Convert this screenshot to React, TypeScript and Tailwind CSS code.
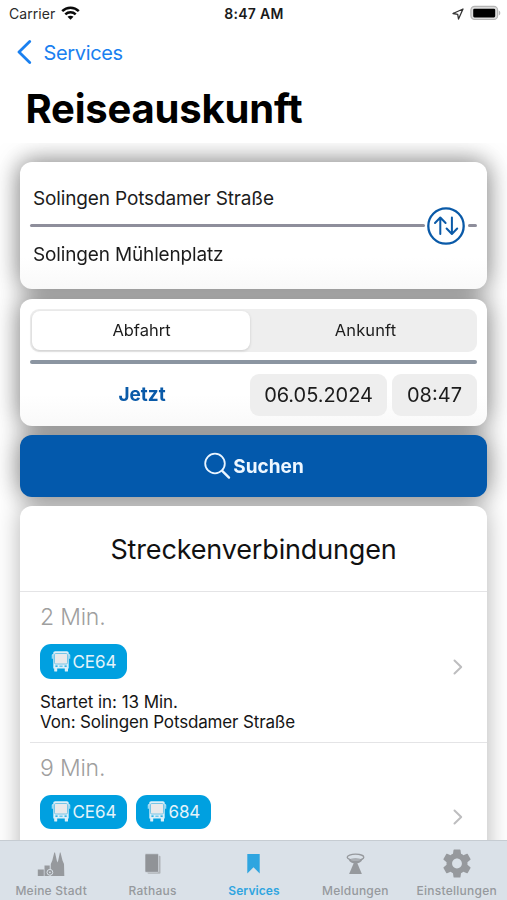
import React from "react";

function BusIcon() {
  return (
    <svg width="20" height="21" viewBox="0 0 20 21" className="block shrink-0">
      <path
        fill="#dceff8"
        fillRule="evenodd"
        d="M4.200 .3h11.600c1.200 0 1.900.7 1.900 1.800V17.500H2.300V2.100C2.300 1 3 .3 4.200.3ZM4.400 14.500v1.300h2.200v-1.300Zm4 .2v.9h3.200v-.9Zm5.100 -.2v1.300h2.200v-1.300Z"
      />
      <rect x="3.500" y="2.500" width="13" height="10.500" rx="1.200" fill="#e9e9ea" stroke="#5bbce6" strokeWidth=".8" />
      <path fill="#dceff8" d="M2.600 17h3.600v2.900c0 .4-.3.700-.7.700H3.900c-.4 0-.7-.3-.7-.7V17ZM13.800 17h3.200v2.900c0 .4-.3.700-.7.700h-1.800c-.4 0-.7-.3-.7-.7Z" />
      <path fill="#dceff8" d="M2.500 3.200H1.600C1.100 3.200.8 3.500.8 4v3.800h.9V4.300h.8ZM17.500 3.200h.9c.5 0 .8.300.8.800v3.800h-.9V4.300h-.8Z" />
    </svg>
  );
}

function Badge({ label, width }: { label: string; width: string }) {
  return (
    <div className={`flex h-[34.500px] items-center rounded-[11px] bg-[#00a0e0] pl-[11px] ${width}`}>
      <BusIcon />
      <span className="ml-[1.500px] pt-[1.500px] text-[17px] leading-none tracking-[-0.1px] text-[#e4f3fa]">{label}</span>
    </div>
  );
}

function Chevron() {
  return (
    <svg width="10" height="16" viewBox="0 0 10 16" className="block">
      <path d="M1.500 1.500 8.200 8 1.500 14.500" fill="none" stroke="#bdbdbf" strokeWidth="2" strokeLinecap="round" strokeLinejoin="round" />
    </svg>
  );
}

function StatusBar() {
  return (
    <div className="grid h-[27px] grid-cols-3 items-center pr-[6px] pl-[9px]">
      <div className="flex items-center gap-[6px]">
        <span className="text-[14px] leading-none tracking-[0.05px] text-[#2b2b2b]">Carrier</span>
        <svg width="19" height="14" viewBox="0 0 19 14" className="-mt-[2px] block">
          <g fill="none" stroke="#0a0a0a" strokeWidth="2.500">
            <path d="M1.200 5.200C5.800.6 13.200.6 17.800 5.200" />
            <path d="M4.300 8.300C7.200 5.500 11.800 5.500 14.700 8.300" />
          </g>
          <path d="M9.500 13.800 6.500 10.700C8.100 9.300 10.900 9.300 12.500 10.700Z" fill="#0a0a0a" />
        </svg>
      </div>
      <div className="pr-[2px] text-center text-[14px] leading-none font-semibold tracking-[0.3px] text-[#1a1a1a]">8:47 AM</div>
      <div className="flex items-center justify-end gap-[6.500px]">
        <svg width="12" height="12" viewBox="0 0 12 12" className="block">
          <path d="M11 1 1 5.500 5.700 6.300 6.500 11Z" fill="none" stroke="#333" strokeWidth="1.300" strokeLinejoin="round" />
        </svg>
        <svg width="31" height="16" viewBox="0 0 31 16" className="-mt-[1px] block">
          <rect x=".9" y="1.300" width="26.700" height="13.200" rx="3.700" fill="#dcdcdc" stroke="#b5b5b5" strokeWidth="1.200" />
          <rect x="3.200" y="3.700" width="22" height="8.700" rx="1.300" fill="#000" />
          <path d="M28.800 5.500c2 .8 2 4.200 0 5Z" fill="#b5b5b5" />
        </svg>
      </div>
    </div>
  );
}

const CARD = "flex h-[127px] flex-col rounded-[12px] bg-linear-to-b from-white from-75% to-[#f9f9f9] px-[10px]";

function RouteCard() {
  return (
    <section className={`${CARD} pt-[23px]`}>
      <div className="h-[21px] pl-[3px] text-[19px] leading-[27px] tracking-[-0.14px] text-[#1c1c1c]">Solingen Potsdamer Straße</div>
      <div className="flex h-[39px] items-center">
        <div className="h-[3.500px] w-[395px] rounded-full bg-[#8e8e9b]" />
        <svg width="38" height="38" viewBox="0 0 38 38" className="mx-[2px] block shrink-0">
          <circle cx="19" cy="19" r="17.700" fill="#fff" stroke="#0a5aa8" strokeWidth="2.300" />
          <g fill="none" stroke="#0a5aa8" strokeWidth="2" strokeLinecap="round" strokeLinejoin="round">
            <path d="M13.300 27V10.800M8 16l5.300-5.500L18.600 16" />
            <path d="M24.900 10.500V26.800M19.600 21.500l5.300 5.500 5.300-5.500" />
          </g>
        </svg>
        <div className="ml-[1px] h-[3.500px] flex-1 rounded-full bg-[#8e8e9b]" />
      </div>
      <div className="-mt-[4.500px] pl-[3px] text-[19px] leading-[27px] tracking-[-0.150px] text-[#1c1c1c]">Solingen Mühlenplatz</div>
    </section>
  );
}

function TimeCard() {
  return (
    <section className={`${CARD} pt-[10px]`}>
      <div className="flex h-[43px] rounded-[9px] bg-[#eeeeee] p-[2px] text-[16.500px] leading-none text-[#1c1c1c]">
        <div className="flex w-[218px] items-center justify-center rounded-[8px] bg-white pl-[1px] shadow-[0_1px_3px_rgba(0,0,0,0.150)]">Abfahrt</div>
        <div className="flex flex-1 items-center justify-center pl-[6px] tracking-[0.1px]">Ankunft</div>
      </div>
      <div className="mt-[8.500px] h-[3.500px] shrink-0 rounded-full bg-[#8b95a1]" />
      <div className="mt-[10px] flex h-[42px] items-center text-[20px] leading-none text-[#1c1c1c]">
        <div className="w-[220px] pr-[2px] pl-[6px] text-center text-[19px] font-bold text-[#0a5aa8]">Jetzt</div>
        <div className="flex h-full w-[137px] items-center justify-center rounded-[9px] bg-[#eeeeee] tracking-[-0.050px]">06.05.2024</div>
        <div className="ml-[5px] flex h-full flex-1 items-center justify-center rounded-[9px] bg-[#eeeeee]">08:47</div>
      </div>
    </section>
  );
}

function Results() {
  return (
    <section className="relative h-[400px] shrink-0 rounded-t-[12px] bg-white">
      <h2 className="flex h-[86px] items-center justify-center border-b border-[#e4e4e6] pt-[2px] text-[27px] leading-none tracking-[-0.15px] text-[#111]">
        Streckenverbindungen
      </h2>
      <article className="flex h-[149.500px] items-center">
        <div className="h-full w-[410px] pl-[20px]">
          <div className="pt-[12px] text-[23px] leading-[27px] font-light tracking-[-0.2px] text-[#9f9f9f]">2 Min.</div>
          <div className="mt-[13px] flex">
            <Badge label="CE64" width="w-[86.500px]" />
          </div>
          <div className="mt-[13px] text-[17px] leading-[20.500px] text-[#151515]">
            <div className="tracking-[-0.05px]">Startet in: 13 Min.</div>
            <div className="tracking-[-0.150px]">Von: Solingen Potsdamer Straße</div>
          </div>
        </div>
        <div className="ml-[22.500px]">
          <Chevron />
        </div>
      </article>
      <article className="ml-[10px] flex h-[150px] items-center border-t border-[#e4e4e6]">
        <div className="h-full w-[400px] pl-[10px]">
          <div className="pt-[12px] text-[23px] leading-[27px] font-light tracking-[-0.2px] text-[#9f9f9f]">9 Min.</div>
          <div className="mt-[13px] flex gap-[9.500px]">
            <Badge label="CE64" width="w-[86.500px]" />
            <Badge label="684" width="w-[75px]" />
          </div>
        </div>
        <div className="ml-[22.500px]">
          <Chevron />
        </div>
      </article>
    </section>
  );
}

function CityIcon() {
  return (
    <svg width="28" height="26" viewBox="0 0 28 26" fill="#96999d">
      <path d="M13.500 25 13.800 13 15.300 9.500 17.300 1.500H18L19.800 9.500 20.500 11.500 21.200 9.500 22.900 1.500H23.500L25.500 9.500 27 13 27.300 25Z" />
      <path d="M7.500 14.500h5.200V25H7.500ZM.8 18.500h6V25h-6Z" />
      <circle cx="12.900" cy="21.300" r="2.900" stroke="#dae1e8" strokeWidth="1" />
      <circle cx="12.900" cy="21.300" r=".9" fill="#dae1e8" />
    </svg>
  );
}

function PagesIcon() {
  return (
    <svg width="18" height="22" viewBox="0 0 18 22">
      <rect x="3.500" y="2.700" width="13" height="18" rx="1" fill="#b0b4b8" />
      <rect x="1" y=".8" width="13.500" height="18.500" rx="1" fill="#909397" stroke="#dae1e8" strokeWidth=".6" />
    </svg>
  );
}

function BookmarkIcon() {
  return (
    <svg width="13" height="20" viewBox="0 0 13 20">
      <path d="M.3 0h12.400v19.500l-6.200-6.300-6.200 6.300Z" fill="#2fa5e0" />
    </svg>
  );
}

function BeaconIcon() {
  return (
    <svg width="19" height="22" viewBox="0 0 19 22">
      <ellipse cx="9.500" cy="4.200" rx="8.300" ry="3" fill="none" stroke="#96999d" strokeWidth="1.300" />
      <path d="M2.500 6.300c2.500 1.500 11.500 1.500 14 0-1 3-4 4.200-7 4.200s-6-1.200-7-4.200Z" fill="#96999d" />
      <ellipse cx="9.500" cy="6.400" rx="4.800" ry="1.500" fill="#abafb4" />
      <path d="M8 9.500h3L15.900 21H3.100Z" fill="#96999d" />
    </svg>
  );
}

function GearIcon() {
  return (
    <svg width="28" height="29" viewBox="2 1.700 20 20.600">
      <path
        fill="#96999d"
        d="M19.430 12.980c.04-.32.07-.64.07-.98s-.03-.66-.07-.98l2.110-1.650c.19-.15.24-.42.12-.64l-2-3.460c-.12-.22-.39-.3-.61-.22l-2.490 1c-.52-.4-1.080-.73-1.690-.98l-.38-2.650C14.460 2.180 14.250 2 14 2h-4c-.25 0-.46.18-.49.42l-.38 2.650c-.61.25-1.170.59-1.690.98l-2.490-1c-.23-.09-.49 0-.61.22l-2 3.460c-.13.22-.07.49.12.64l2.110 1.650c-.04.32-.07.65-.07.98s.03.66.07.98l-2.110 1.650c-.19.15-.24.42-.12.64l2 3.460c.12.22.39.3.61.22l2.490-1c.52.4 1.080.73 1.690.98l.38 2.650c.03.24.24.42.49.42h4c.25 0 .46-.18.49-.42l.38-2.650c.61-.25 1.170-.59 1.690-.98l2.490 1c.23.09.49 0 .61-.22l2-3.460c.12-.22.07-.49-.12-.64ZM12 15.500c-1.930 0-3.500-1.570-3.500-3.500s1.570-3.500 3.500-3.500 3.500 1.570 3.500 3.500-1.570 3.500-3.500 3.500Z"
      />
    </svg>
  );
}

const tabs = [
  { label: "Meine Stadt", icon: <CityIcon />, active: false },
  { label: "Rathaus", icon: <PagesIcon />, active: false },
  { label: "Services", icon: <BookmarkIcon />, active: true },
  { label: "Meldungen", icon: <BeaconIcon />, active: false },
  { label: "Einstellungen", icon: <GearIcon />, active: false },
];

export default function App() {
  return (
    <div className="flex h-[900px] w-[507px] flex-col overflow-hidden bg-white font-['Inter','Liberation_Sans',sans-serif]">
      <header className="h-[143px] shrink-0">
        <StatusBar />
        <div className="flex h-[50px] items-center gap-[11.500px] pl-[17px] text-[#1a80f0]">
          <svg width="15" height="24" viewBox="0 0 15 24" className="block">
            <path d="M12.700 1.500 2 12l10.700 10.500" fill="none" stroke="currentColor" strokeWidth="2.800" strokeLinecap="round" strokeLinejoin="round" />
          </svg>
          <span className="pt-[1px] text-[20px] leading-none tracking-[-0.35px]">Services</span>
        </div>
        <h1 className="pt-[10px] pl-[25.500px] text-[40px] leading-[44px] font-bold tracking-[-0.2px] text-black">Reiseauskunft</h1>
      </header>
      <main className="min-h-0 flex-1 overflow-hidden">
        <div className="flex flex-col gap-[9.500px] px-[20px] pt-[19px] drop-shadow-[0_0_12px_rgba(0,0,0,0.3)]">
          <div className="flex flex-col gap-[9.500px] drop-shadow-[0_0_12px_rgba(0,0,0,0.28)]">
            <RouteCard />
            <TimeCard />
            <button className="flex h-[61.500px] items-center justify-center gap-[2px] rounded-[12px] bg-[#0359ac]">
              <svg width="28" height="28" viewBox="0 0 28 28" className="block">
                <circle cx="12" cy="11.500" r="9.800" fill="none" stroke="#eaf5ff" strokeWidth="1.800" />
                <path d="m19.200 18.800 6.800 6.800" stroke="#eaf5ff" strokeWidth="2.400" strokeLinecap="round" />
              </svg>
              <span className="pt-[2px] text-[19px] leading-none font-bold text-[#eef7ff]">Suchen</span>
            </button>
          </div>
          <Results />
        </div>
      </main>
      <nav className="grid h-[60px] shrink-0 grid-cols-5 border-t border-[#c6ccd2] bg-[#dae1e8]">
        {tabs.map((tab) => (
          <div key={tab.label} className={`flex flex-col items-center pl-px ${tab.active ? "text-[#2fa5e0]" : "text-[#96999d]"}`}>
            <div className="flex h-[43px] items-center pt-[2px]">{tab.icon}</div>
            <span className={`text-[12px] leading-[14px] whitespace-nowrap ${tab.active ? "font-semibold tracking-[0.1px]" : "font-medium tracking-[0.25px]"}`}>{tab.label}</span>
          </div>
        ))}
      </nav>
    </div>
  );
}
